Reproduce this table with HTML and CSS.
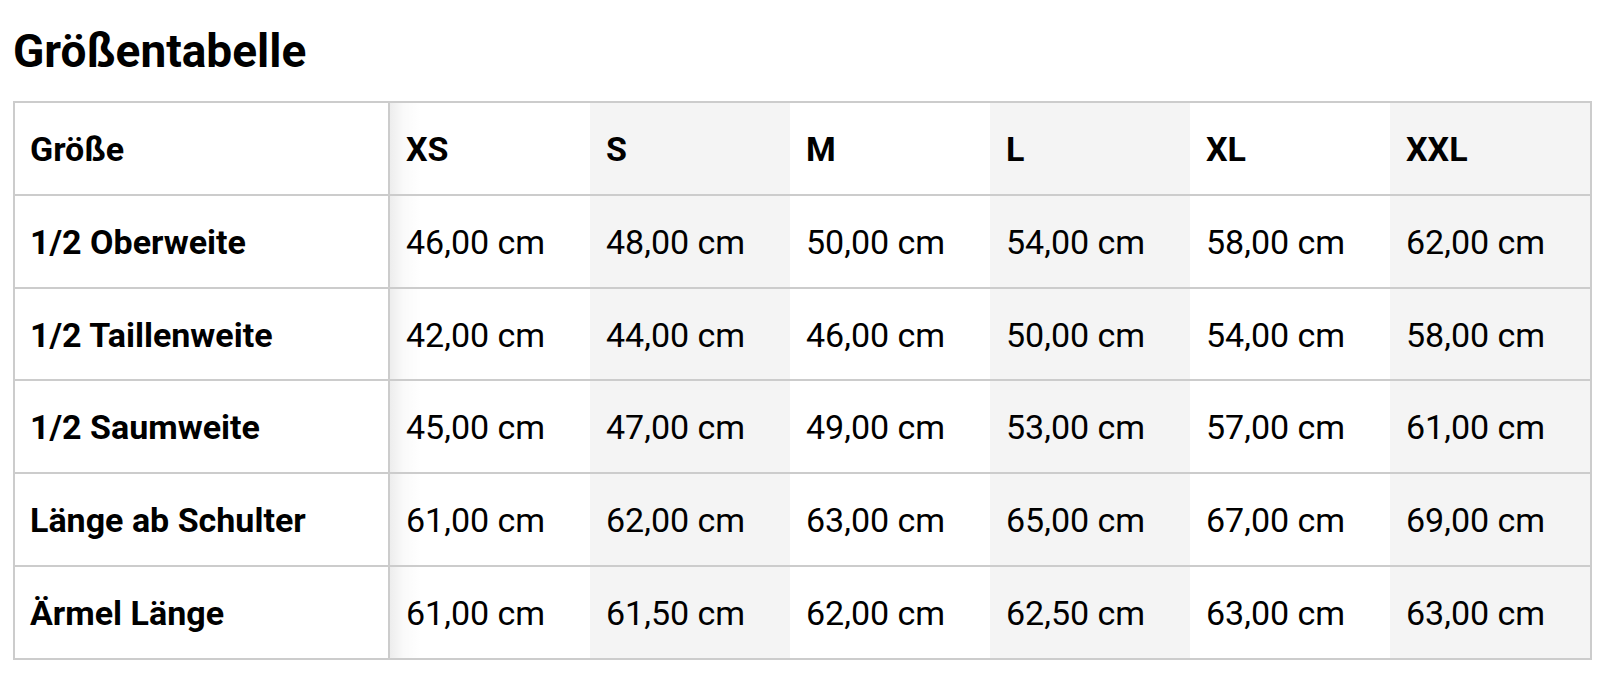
FILE: index.html
```html
<!DOCTYPE html>
<html lang="de">
<head>
<meta charset="utf-8">
<title>Größentabelle</title>
<link rel="stylesheet" href="styles.css">
</head>
<body>
<div class="page">
  <h1 class="title">Größentabelle</h1>
  <table class="sizes">
    <colgroup>
      <col class="c-label">
      <col class="c-size"><col class="c-size"><col class="c-size"><col class="c-size"><col class="c-size"><col class="c-size">
    </colgroup>
    <thead>
      <tr>
        <th class="label">Größe</th>
        <th class="first">XS</th><th class="alt">S</th><th>M</th><th class="alt">L</th><th>XL</th><th class="alt">XXL</th>
      </tr>
    </thead>
    <tbody>
      <tr>
        <th class="label">1/2 Oberweite</th>
        <td class="first">46,00 cm</td><td class="alt">48,00 cm</td><td>50,00 cm</td><td class="alt">54,00 cm</td><td>58,00 cm</td><td class="alt">62,00 cm</td>
      </tr>
      <tr>
        <th class="label">1/2 Taillenweite</th>
        <td class="first">42,00 cm</td><td class="alt">44,00 cm</td><td>46,00 cm</td><td class="alt">50,00 cm</td><td>54,00 cm</td><td class="alt">58,00 cm</td>
      </tr>
      <tr>
        <th class="label">1/2 Saumweite</th>
        <td class="first">45,00 cm</td><td class="alt">47,00 cm</td><td>49,00 cm</td><td class="alt">53,00 cm</td><td>57,00 cm</td><td class="alt">61,00 cm</td>
      </tr>
      <tr>
        <th class="label">Länge ab Schulter</th>
        <td class="first">61,00 cm</td><td class="alt">62,00 cm</td><td>63,00 cm</td><td class="alt">65,00 cm</td><td>67,00 cm</td><td class="alt">69,00 cm</td>
      </tr>
      <tr>
        <th class="label">Ärmel Länge</th>
        <td class="first">61,00 cm</td><td class="alt">61,50 cm</td><td>62,00 cm</td><td class="alt">62,50 cm</td><td>63,00 cm</td><td class="alt">63,00 cm</td>
      </tr>
    </tbody>
  </table>
</div>
</body>
</html>
```

FILE: styles.css
```css
html, body {
  margin: 0;
  padding: 0;
  background: #ffffff;
}

body {
  font-family: Roboto, "Liberation Sans", Arial, sans-serif;
  color: #000000;
}

.page {
  padding: 0 13px;
}

.title {
  margin: 0;
  padding-top: 23px;
  font-size: 46px;
  line-height: 56px;
  font-weight: 700;
  letter-spacing: 0;
}

.sizes {
  margin-top: 22px;
  width: 1579px;
  table-layout: fixed;
  border-collapse: separate;
  border-spacing: 0;
  border: 2px solid #cccccc;
}

.c-label { width: 375px; }
.c-size { width: 200px; }

.sizes th,
.sizes td {
  padding: 2px 15px 0 15px;
  height: 88.83px;
  line-height: 88.83px;
  font-size: 34px;
  text-align: left;
  vertical-align: top;
  white-space: nowrap;
  box-sizing: content-box;
}

.sizes th {
  font-weight: 700;
}

.sizes td {
  font-weight: 400;
  padding-left: 16px;
  padding-right: 14px;
}

.sizes thead th:not(.label) {
  padding-left: 16px;
  padding-right: 14px;
}

.sizes tbody tr th,
.sizes tbody tr td {
  border-top: 2px solid #cccccc;
}

.sizes .label {
  border-right: 2px solid #cccccc;
  background: #ffffff;
}

.sizes .alt {
  background: #f4f4f4;
}

.sizes .first {
  background: linear-gradient(to right, rgba(0, 0, 0, 0.07) 0px, rgba(0, 0, 0, 0.02) 14px, rgba(0, 0, 0, 0) 32px), #ffffff;
}
```
